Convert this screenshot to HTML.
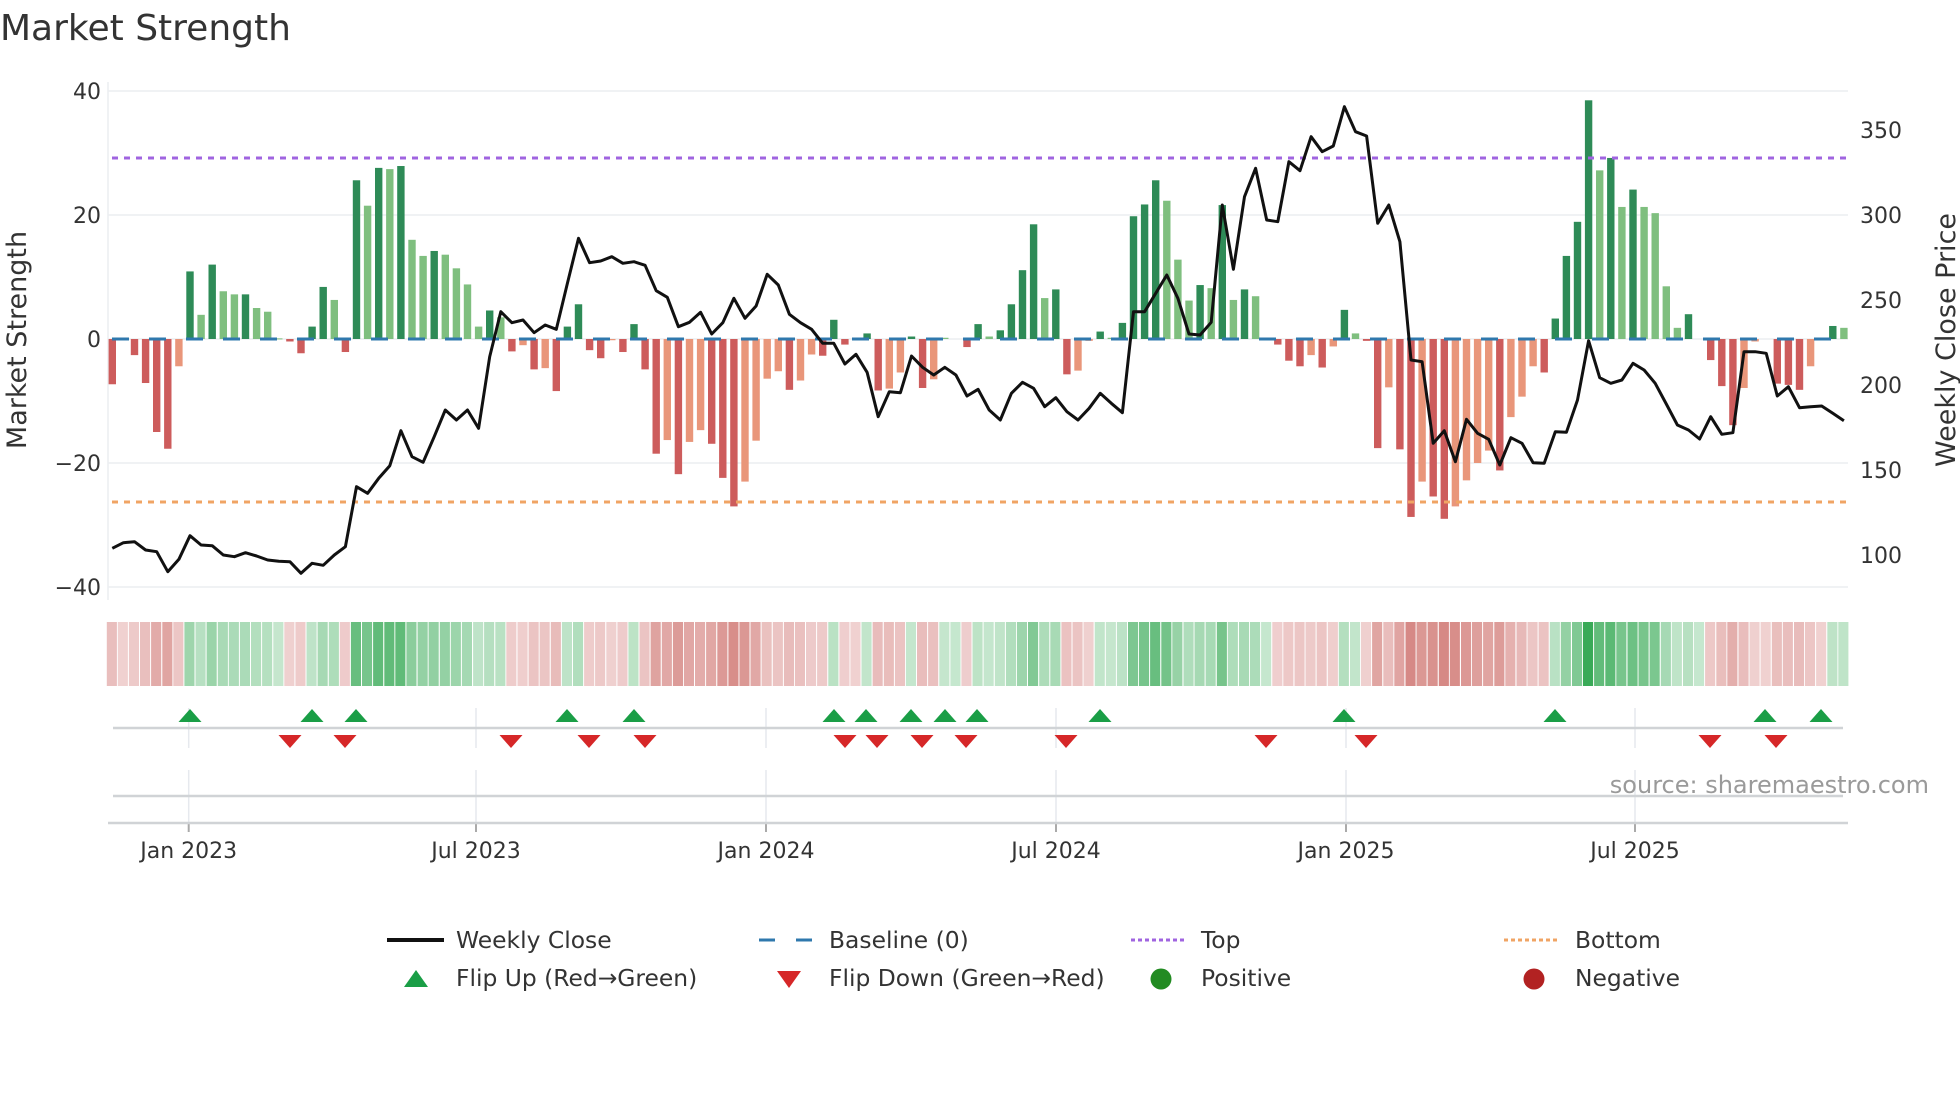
<!DOCTYPE html>
<html><head><meta charset="utf-8">
<style>
html,body{margin:0;padding:0;background:#fff;width:1960px;height:1102px;overflow:hidden}
svg{display:block}
text{font-family:"DejaVu Sans","Liberation Sans",sans-serif}
</style></head><body>
<svg id="s" width="1960" height="1102" viewBox="0 0 1960 1102" xmlns="http://www.w3.org/2000/svg">
<rect width="1960" height="1102" fill="#fff"/>
<text x="0" y="40" font-size="36" fill="#333">Market Strength</text>
<g stroke="#eceef1" stroke-width="1.5">
<line x1="108" y1="91" x2="1848" y2="91"/><line x1="108" y1="215" x2="1848" y2="215"/>
<line x1="108" y1="339" x2="1848" y2="339"/><line x1="108" y1="463" x2="1848" y2="463"/>
<line x1="108" y1="587" x2="1848" y2="587"/>
<line x1="108" y1="82" x2="108" y2="600"/>
</g>
<g font-size="22" fill="#333" text-anchor="end">
<text x="101" y="99">40</text><text x="101" y="223">20</text><text x="101" y="347">0</text>
<text x="101" y="471">−20</text><text x="101" y="595">−40</text>
</g>
<g font-size="22" fill="#333">
<text x="1860" y="138">350</text><text x="1860" y="223">300</text><text x="1860" y="308">250</text>
<text x="1860" y="393">200</text><text x="1860" y="478">150</text><text x="1860" y="563">100</text>
</g>
<text transform="translate(26,340) rotate(-90)" text-anchor="middle" font-size="27" fill="#333">Market Strength</text>
<text transform="translate(1955,340) rotate(-90)" text-anchor="middle" font-size="27" fill="#333">Weekly Close Price</text>
<g id="bars"></g>
<line x1="112" y1="158" x2="1848" y2="158" stroke="#a064e0" stroke-width="3" stroke-dasharray="6 6"/>
<line x1="112" y1="502" x2="1848" y2="502" stroke="#f0a464" stroke-width="3" stroke-dasharray="6 6"/>
<line x1="112" y1="339" x2="1848" y2="339" stroke="#2f78ad" stroke-width="3" stroke-dasharray="17 20"/>
<polyline id="price" fill="none" stroke="#111" stroke-width="3" stroke-linejoin="round"/>
<g id="strip"></g>
<g stroke="#e6e9ee" stroke-width="1.5" id="vgrid"></g>
<line x1="113" y1="728" x2="1843" y2="728" stroke="#d0d3d6" stroke-width="2.5"/>
<line x1="113" y1="796" x2="1843" y2="796" stroke="#d0d3d6" stroke-width="2.5"/>
<line x1="108" y1="823" x2="1848" y2="823" stroke="#d0d3d6" stroke-width="2.5"/>
<g id="marks"></g>
<g id="ticks" font-size="22" fill="#333" text-anchor="middle"></g>
<text x="1929" y="793" text-anchor="end" font-size="24" fill="#9a9a9a">source: sharemaestro.com</text>
<g font-size="23.4" fill="#333">
<line x1="387" y1="940" x2="444" y2="940" stroke="#111" stroke-width="4"/>
<text x="456" y="948">Weekly Close</text>
<line x1="759" y1="940" x2="775" y2="940" stroke="#2f78ad" stroke-width="3"/>
<line x1="796" y1="940" x2="812" y2="940" stroke="#2f78ad" stroke-width="3"/>
<text x="829" y="948">Baseline (0)</text>
<line x1="1131" y1="940" x2="1187" y2="940" stroke="#a064e0" stroke-width="3" stroke-dasharray="4 3"/>
<text x="1201" y="948">Top</text>
<line x1="1504" y1="940" x2="1560" y2="940" stroke="#f0a464" stroke-width="3" stroke-dasharray="4 3"/>
<text x="1575" y="948">Bottom</text>
<polygon points="404,987 428,987 416,970" fill="#1a9e46"/>
<text x="456" y="986">Flip Up (Red→Green)</text>
<polygon points="777,971 801,971 789,988" fill="#d62728"/>
<text x="829" y="986">Flip Down (Green→Red)</text>
<circle cx="1161" cy="979" r="10.5" fill="#228b22"/>
<text x="1201" y="986">Positive</text>
<circle cx="1534" cy="979" r="10.5" fill="#b22222"/>
<text x="1575" y="986">Negative</text>
</g>
</svg>
<script>
(function(){
var NS="http://www.w3.org/2000/svg";
function el(n,a,p){var e=document.createElementNS(NS,n);for(var k in a)e.setAttribute(k,a[k]);p.appendChild(e);return e;}
var d="-7.3R,0,-2.6R,-7.1R,-15R,-17.7R,-4.4O,10.9D,3.9L,12D,7.7L,7.2L,7.2D,5L,4.4L,0.1L,-0.4R,-2.3R,2D,8.4D,6.3L,-2.1R,25.6D,21.5L,27.6D,27.4L,27.9D,16L,13.4L,14.2D,13.6L,11.4L,8.8L,2L,4.6D,3.5L,-2R,-1O,-4.9R,-4.7O,-8.4R,2D,5.6D,-1.8R,-3.1R,-0.2O,-2.1R,2.4D,-4.9R,-18.5R,-16.3O,-21.8R,-16.6O,-14.7O,-16.9R,-22.4R,-27R,-23O,-16.4O,-6.4O,-5.2O,-8.2R,-6.7O,-2.5O,-2.7R,3.1D,-0.9R,0,0.9D,-8.3R,-8O,-5.4O,0.4D,-7.9R,-6.5O,0.2L,0,-1.3R,2.4D,0.4L,1.4D,5.6D,11.1D,18.5D,6.6L,8D,-5.7R,-5.1O,-0.3O,1.2D,0.2L,2.6D,19.8D,21.7D,25.6D,22.3L,12.8L,6.2L,8.7D,8.2L,21.6D,6.3L,8D,6.9L,0,-0.9R,-3.5R,-4.4R,-2.6O,-4.6R,-1.2O,4.7D,0.9L,-0.3R,-17.6R,-7.8O,-17.8R,-28.7R,-23O,-25.4R,-29R,-27O,-22.8O,-20O,-18O,-21.2R,-12.6O,-9.3O,-4.4O,-5.4R,3.3D,13.4D,18.9D,38.5D,27.2L,29.2D,21.3L,24.1D,21.3L,20.3L,8.5L,1.8L,4D,0,-3.4R,-7.6R,-13.9R,-7.9O,-0.4O,0,-7.2R,-7.4R,-8.2R,-4.4O,0,2.1D,1.8L".split(",");
var py=[1405,1388,1385,1410,1415,1475,1438,1367,1395,1397,1425,1430,1418,1428,1440,1444,1445,1480,1450,1456,1425,1400,1220,1240,1195,1157,1052,1130,1147,1070,990,1020,990,1045,830,695,728,720,758,735,748,610,475,548,543,530,550,545,556,632,652,740,727,697,762,728,655,715,678,583,615,703,728,748,790,790,852,823,877,1010,935,938,828,862,885,862,885,948,928,990,1020,940,907,925,980,953,995,1020,985,940,970,998,695,695,640,585,655,762,765,727,375,568,350,265,420,425,245,272,170,215,198,80,155,168,430,375,485,840,845,1090,1052,1145,1018,1060,1078,1155,1073,1090,1148,1150,1055,1057,960,782,893,910,900,850,870,910,972,1035,1050,1077,1010,1063,1058,815,815,820,948,920,983,980,978,1000,1022];
var col={D:"#2e8b57",L:"#7fbf7f",R:"#cd5c5c",O:"#e9967a"};
var bars=document.getElementById("bars"),strip=document.getElementById("strip");
var pts=[],prev=-1;
for(var i=0;i<d.length;i++){
 var s=d[i],c=s.slice(-1),v;
 if(col[c]){v=parseFloat(s.slice(0,-1));}else{v=0;c=null;}
 var x=112.3+11.1*i;
 if(c&&Math.abs(v)>0.05){var h=Math.abs(v)*6.2;el("rect",{x:x-3.7,y:v>0?339-h:339,width:7.4,height:Math.max(h,1),fill:col[c]},bars);}
 pts.push(x.toFixed(1)+","+(80+py[i]/3).toFixed(1));
 var sg=v>0?1:(v<0?-1:prev);if(v!==0)prev=sg;
 var t=Math.min(Math.abs(v)/40,1)*0.9+0.1,r,g,b;
 if(sg>0){r=214+(52-214)*t;g=238+(168-238)*t;b=220+(83-220)*t;}
 else{r=244+(205-244)*t;g=220+(110-220)*t;b=220+(105-220)*t;}
 el("rect",{x:(x-5.55).toFixed(1),y:622,width:10.1,height:64,fill:"rgb("+(r|0)+","+(g|0)+","+(b|0)+")"},strip);
}
document.getElementById("price").setAttribute("points",pts.join(" "));
var vg=document.getElementById("vgrid"),tk=document.getElementById("ticks");
var T=[[188.7,"Jan 2023"],[476,"Jul 2023"],[766,"Jan 2024"],[1056,"Jul 2024"],[1346,"Jan 2025"],[1635,"Jul 2025"]];
T.forEach(function(t){
 el("line",{x1:t[0],y1:708,x2:t[0],y2:748},vg);
 el("line",{x1:t[0],y1:770,x2:t[0],y2:823},vg);
 el("line",{x1:t[0],y1:823,x2:t[0],y2:832,stroke:"#aaa","stroke-width":2},vg);
 var e=el("text",{x:t[0],y:858},tk);e.textContent=t[1];
});
var mk=document.getElementById("marks");
[190,312,356,567,634,834,866,911,945,977,1100,1344,1555,1765,1821].forEach(function(x){
 el("polygon",{points:(x-11.5)+",722 "+(x+11.5)+",722 "+x+",709",fill:"#1a9e46"},mk);});
[290,345,511,589,645,845,877,922,966,1066,1266,1366,1710,1776].forEach(function(x){
 el("polygon",{points:(x-11.5)+",735 "+(x+11.5)+",735 "+x+",748",fill:"#d62728"},mk);});
})();
</script>
</body></html>
